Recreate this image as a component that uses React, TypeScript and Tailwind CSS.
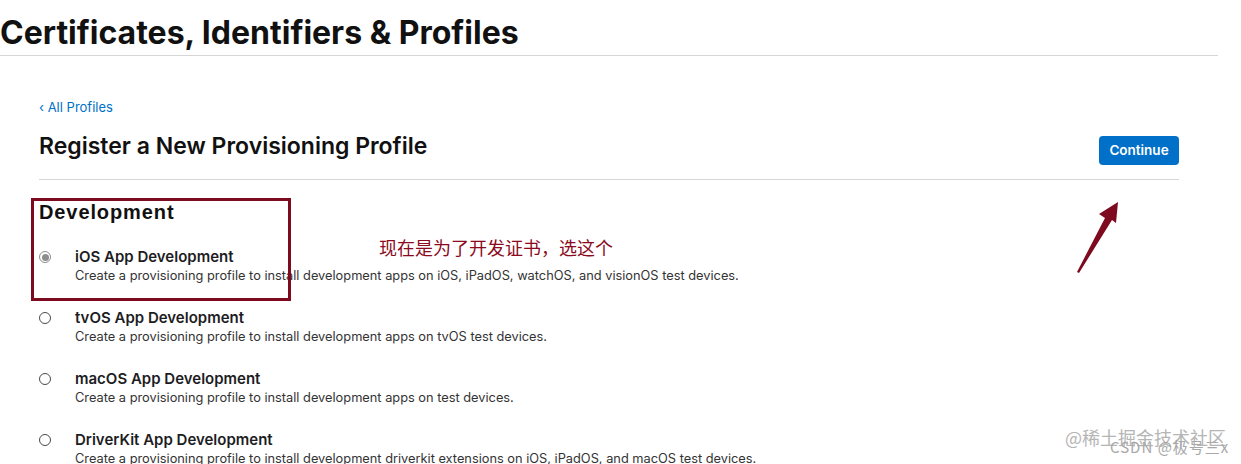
import React from "react";

const profiles = [
  {
    title: "iOS App Development",
    desc: "Create a provisioning profile to install development apps on iOS, iPadOS, watchOS, and visionOS test devices.",
    selected: true,
  },
  {
    title: "tvOS App Development",
    desc: "Create a provisioning profile to install development apps on tvOS test devices.",
    selected: false,
  },
  {
    title: "macOS App Development",
    desc: "Create a provisioning profile to install development apps on test devices.",
    selected: false,
  },
  {
    title: "DriverKit App Development",
    desc: "Create a provisioning profile to install development driverkit extensions on iOS, iPadOS, and macOS test devices.",
    selected: false,
  },
];

function Radio({ checked }: { checked: boolean }) {
  if (checked) {
    return (
      <span className="mt-[2px] flex h-[12px] w-[12px] shrink-0 items-center justify-center rounded-full border border-[#8d8d8d] bg-white">
        <span className="h-[7px] w-[7px] rounded-full bg-[#8d8d8d]" />
      </span>
    );
  }
  return (
    <span className="mt-[2px] block h-[12px] w-[12px] shrink-0 rounded-full border border-[#4a4a4a] bg-white" />
  );
}

export default function App() {
  return (
    <div className="relative h-[464px] w-[1241px] overflow-hidden bg-white font-['Inter',sans-serif] text-[#1d1d1f]">
      {/* page header */}
      <div className="w-[1218px] border-b border-[#d6d6d6] pb-[2px] pt-[13px]">
        <h1 className="text-[32px] font-bold leading-[40px] text-[#111]">
          Certificates, Identifiers &amp; Profiles
        </h1>
      </div>

      <div className="w-[1179px] pl-[39px]">
        <a className="mt-[43px] block text-[13px] leading-[16px] text-[#0070c9]">
          ‹ All Profiles
        </a>

        <div className="mt-[17px] flex items-start justify-between border-b border-[#d6d6d6] pb-[14px]">
          <h2 className="text-[23px] font-semibold leading-[28px] text-[#111]">
            Register a New Provisioning Profile
          </h2>
          <button className="mt-[4px] h-[29px] w-[80px] rounded-[4px] bg-[#0070c9] text-[13.5px] font-semibold text-white">
            Continue
          </button>
        </div>

        <h3 className="mt-[20px] font-['Liberation_Sans',sans-serif] text-[20px] font-bold leading-[24px] tracking-[0.9px] text-[#111]">
          Development
        </h3>

        <div className="mt-[25px] flex flex-col gap-[26px]">
          {profiles.map((p) => (
            <div key={p.title} className="flex items-start">
              <Radio checked={p.selected} />
              <div className="ml-[24px] flex flex-col">
                <div className="text-[15px] font-semibold leading-[16px] text-[#1d1d1f]">
                  {p.title}
                </div>
                <div className="mt-[3px] text-[12.8px] leading-[16px] text-[#333]">
                  {p.desc}
                </div>
              </div>
            </div>
          ))}
        </div>
      </div>

      {/* annotation overlay */}
      <div className="pointer-events-none absolute left-[31px] top-[198px] h-[103px] w-[260px] border-[3px] border-[#7d0a1f]" />
      <div className="absolute left-[379px] top-[235px] font-['Noto_Sans_CJK_SC',sans-serif] text-[18px] leading-[24px] text-[#8b0a1e]">
        现在是为了开发证书，选这个
      </div>
      <svg
        className="absolute left-[1070px] top-[196px]"
        width="56"
        height="82"
        viewBox="0 0 56 82"
      >
        <path
          d="M7 76 L35 22 L29 18 L48 6 L46 27 L42 24 L9 77 Z"
          fill="#7d0a1f"
        />
      </svg>

      {/* watermarks */}
      <div className="absolute left-[1065px] top-[426px] font-['Noto_Sans_CJK_SC',sans-serif] text-[18px] leading-[22px] text-[#b5b5b5]">
        @稀土掘金技术社区
      </div>
      <div className="absolute left-[1110px] top-[438px] font-['Noto_Sans_CJK_SC',sans-serif] text-[15px] leading-[18px] tracking-[1px] text-[#a8a8a8]">
        CSDN @极号三x
      </div>
    </div>
  );
}
